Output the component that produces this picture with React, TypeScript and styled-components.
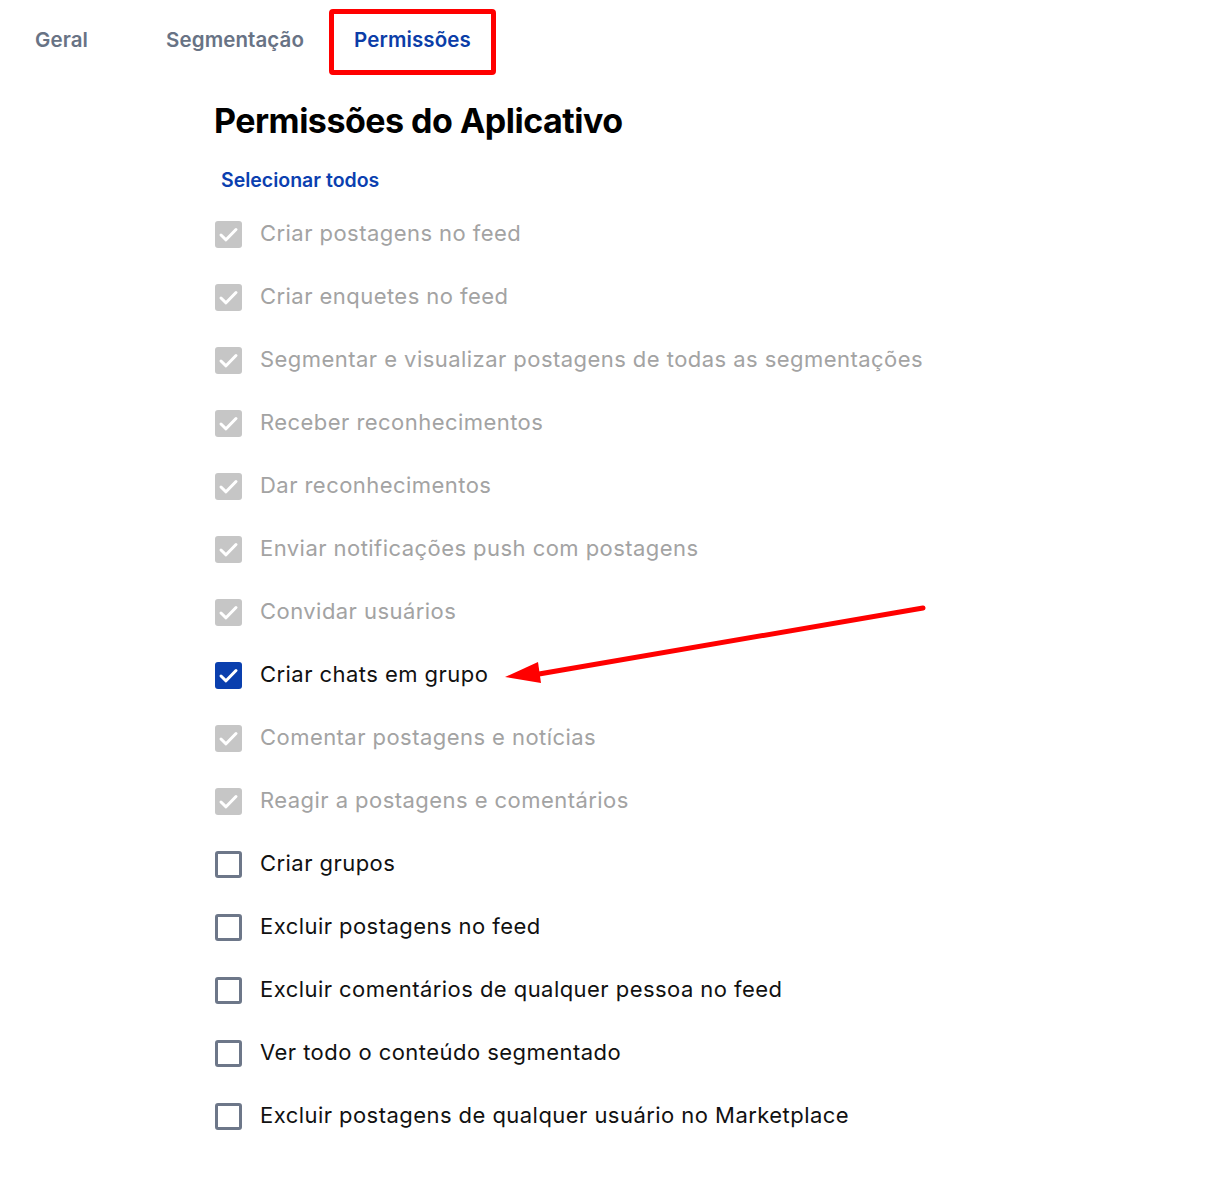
import React, { FC, ReactElement } from "react";
import styled, { createGlobalStyle } from "styled-components";

type State = "locked" | "checked" | "empty";

const permissions: { label: string; state: State }[] = [
  { label: "Criar postagens no feed", state: "locked" },
  { label: "Criar enquetes no feed", state: "locked" },
  { label: "Segmentar e visualizar postagens de todas as segmentações", state: "locked" },
  { label: "Receber reconhecimentos", state: "locked" },
  { label: "Dar reconhecimentos", state: "locked" },
  { label: "Enviar notificações push com postagens", state: "locked" },
  { label: "Convidar usuários", state: "locked" },
  { label: "Criar chats em grupo", state: "checked" },
  { label: "Comentar postagens e notícias", state: "locked" },
  { label: "Reagir a postagens e comentários", state: "locked" },
  { label: "Criar grupos", state: "empty" },
  { label: "Excluir postagens no feed", state: "empty" },
  { label: "Excluir comentários de qualquer pessoa no feed", state: "empty" },
  { label: "Ver todo o conteúdo segmentado", state: "empty" },
  { label: "Excluir postagens de qualquer usuário no Marketplace", state: "empty" },
];

const tabs = ["Geral", "Segmentação", "Permissões"];

const App: FC = (): ReactElement => {
  return (
    <Page>
      <GlobalStyle />
      <Tabs>
        {tabs.map((t, i) => (
          <Tab key={t} active={i === 2} first={i === 0}>
            {t}
          </Tab>
        ))}
      </Tabs>
      <Content>
        <Title>Permissões do Aplicativo</Title>
        <SelectAll>Selecionar todos</SelectAll>
        <List>
          {permissions.map((p) => (
            <Row key={p.label}>
              <Box state={p.state}>
                {p.state !== "empty" && (
                  <svg width="27" height="27" viewBox="0 0 27 27">
                    <path
                      d="M6 14 L11 18.8 L21 8.5"
                      fill="none"
                      stroke="#fff"
                      strokeWidth="3"
                      strokeLinecap="round"
                      strokeLinejoin="round"
                    />
                  </svg>
                )}
              </Box>
              <Label state={p.state}>{p.label}</Label>
            </Row>
          ))}
        </List>
      </Content>
      <Arrow width="440" height="100" viewBox="0 0 440 100">
        <line x1="418" y1="18" x2="34" y2="84" stroke="#ff0000" strokeWidth="5" strokeLinecap="round" />
        <polygon points="0,87 33,72 36,93" fill="#ff0000" />
      </Arrow>
    </Page>
  );
};

export default App;

const GlobalStyle = createGlobalStyle`
  body {
    margin: 0;
    background: #ffffff;
    font-family: Inter, "Noto Sans", sans-serif;
  }
`;

const Page = styled.div`
  position: relative;
  width: 1212px;
  min-height: 1188px;
  background: #ffffff;
`;

const Tabs = styled.nav`
  display: flex;
  align-items: flex-start;
  padding: 9px 0 0 10px;
  height: 75px;
  box-sizing: border-box;
`;

const Tab = styled.div<{ active?: boolean; first?: boolean }>`
  box-sizing: border-box;
  height: 66px;
  display: flex;
  align-items: center;
  padding: 0 20px 6px;
  margin-right: ${(p) => (p.first ? "28px" : "0")};
  font-size: 20.5px;
  font-weight: 600;
  letter-spacing: 0.1px;
  color: ${(p) => (p.active ? "#0b3da8" : "#687385")};
  border: 5px solid ${(p) => (p.active ? "#ff0000" : "transparent")};
  border-radius: 4px;
`;

const Content = styled.main`
  padding-left: 214px;
  padding-top: 22px;
`;

const Title = styled.h1`
  margin: 0;
  font-size: 34px;
  font-weight: 700;
  color: #000000;
  letter-spacing: -0.5px;
  line-height: 48px;
`;

const SelectAll = styled.button`
  margin: 24px 0 0 7px;
  padding: 0;
  border: 0;
  background: none;
  font-family: Inter, "Noto Sans", sans-serif;
  font-size: 19.5px;
  font-weight: 600;
  color: #0b3fb0;
  line-height: 22px;
  cursor: pointer;
`;

const List = styled.ul`
  list-style: none;
  margin: 10px 0 0 0;
  padding: 0;
`;

const Row = styled.li`
  display: flex;
  align-items: center;
  gap: 18px;
  height: 63px;
`;

const Box = styled.span<{ state: State }>`
  box-sizing: border-box;
  width: 27px;
  height: 27px;
  margin-left: 1px;
  margin-top: 3px;
  border-radius: 3px;
  display: flex;
  align-items: center;
  justify-content: center;
  background: ${(p) =>
    p.state === "locked" ? "#c6c6c6" : p.state === "checked" ? "#0a3fae" : "#ffffff"};
  border: ${(p) => (p.state === "empty" ? "3px solid #6d7789" : "none")};
`;

const Label = styled.span<{ state: State }>`
  font-size: 22px;
  line-height: 28px;
  letter-spacing: 0.45px;
  color: ${(p) => (p.state === "locked" ? "#a3a3a3" : "#111111")};
`;

const Arrow = styled.svg`
  position: absolute;
  left: 505px;
  top: 590px;
  overflow: visible;
`;
